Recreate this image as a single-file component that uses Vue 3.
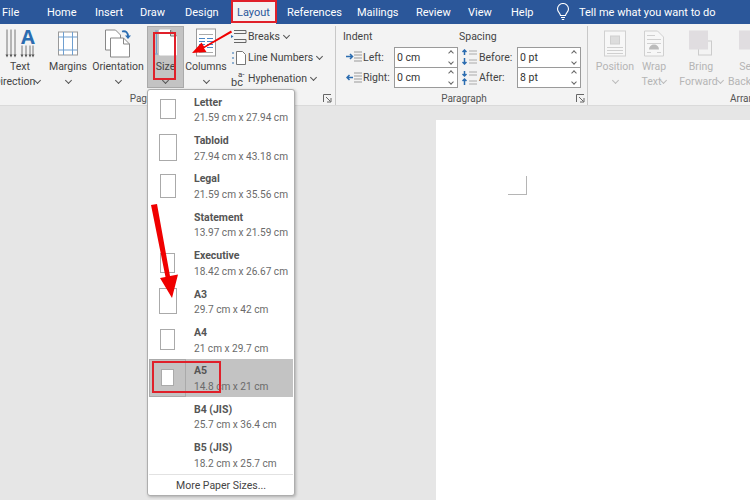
<template>
  <div class="word">
    <nav class="tabs">
      <span v-for="tab in tabs" :key="tab.name" class="tab" :class="{ active: tab.name === 'Layout' }" :style="{ width: tab.w + 'px' }">{{ tab.name }}</span>
      <svg class="bulb" width="14" height="18" viewBox="0 0 14 18" fill="none" stroke="#fff" stroke-width="1.1">
        <path d="M4.500 12.500C4.200 10 1.500 9 1.500 6a5.500 5.500 0 0 1 11 0c0 3-2.700 4-3 6.500z" />
        <path d="M5 14.500h4M5.800 16.500h2.400" />
      </svg>
      <span class="tell">Tell me what you want to do</span>
    </nav>

    <section class="ribbon">
      <div class="group page-group">
        <div class="group-body">
          <div class="tool t-text">
            <svg width="36" height="30" viewBox="0 0 36 30" fill="none">
              <g stroke="#777" stroke-width="1">
                <path d="M5 1v26M9 1v26M13 1v26M20 17v10M24 17v10M28 17v10M31 17v10" />
              </g>
              <g fill="#555">
                <path d="M3.500 26h3L5 29zM7.500 26h3L9 29zM11.500 26h3L13 29zM18.500 26h3L20 29zM22.500 26h3L24 29zM26.500 26h3L28 29zM29.500 26h3L31 29z" />
              </g>
              <text x="19" y="15" class="big-a">A</text>
            </svg>
            <span class="lbl">Text</span>
            <span class="lbl">Direction<i class="chev"></i></span>
          </div>
          <div class="tool t-margins">
            <svg width="22" height="26" viewBox="0 0 22 26" fill="#fff" stroke="#999">
              <rect x="1.500" y="1.500" width="19" height="23" />
              <path d="M6.500 1.500v23M15.500 1.500v23M1.500 6.500h19M1.500 19.500h19" stroke="#6f9fd0" />
            </svg>
            <span class="lbl">Margins</span>
            <span class="lbl"><i class="chev"></i></span>
          </div>
          <div class="tool t-orient">
            <svg width="28" height="30" viewBox="0 0 28 30" fill="#fff" stroke="#888">
              <path d="M1.500 1.500h10l5 5v15h-15z" />
              <path d="M6.500 9.500h13l6 6v13h-19z" />
              <path d="M19.500 9.500v6h6" fill="none" />
              <path d="M18 3c4-1 6 1 6 5" fill="none" stroke="#2b6cb0" stroke-width="1.800" />
              <path d="M21 7h6l-3 3.500z" fill="#2b6cb0" stroke="none" />
            </svg>
            <span class="lbl">Orientation</span>
            <span class="lbl"><i class="chev"></i></span>
          </div>
          <div class="tool t-size">
            <svg width="26" height="30" viewBox="0 0 26 30" fill="#fff" stroke="#777">
              <path d="M3.500 3v22M2 2.500h3M2 25.500h3" stroke="#6f9fd0" fill="none" />
              <path d="M6.500 1.500h11l6 6v19h-17z" stroke="#fff" />
              <path d="M17.500 1.500v6h6z" fill="#ddd" />
            </svg>
            <span class="lbl">Size</span>
            <span class="lbl"><i class="chev"></i></span>
          </div>
          <div class="tool t-columns">
            <svg width="20" height="30" viewBox="0 0 20 30" fill="#fff" stroke="#999">
              <rect x="0.500" y="0.500" width="19" height="27" />
              <path d="M3 6h14M3 24h14" stroke="#aaa" fill="none" />
              <path d="M3 10h6M11 10h6M3 13h6M11 13h6M3 16h6M11 16h6M3 19h6M11 19h6" stroke="#4a86c5" fill="none" />
            </svg>
            <span class="lbl">Columns</span>
            <span class="lbl"><i class="chev"></i></span>
          </div>
          <div class="stack">
            <div class="stack-row">
              <svg width="16" height="15" viewBox="0 0 16 15" fill="none" stroke="#666">
                <path d="M3 1.500h12v3H3M3 13.500h12v-3H3" />
                <path d="M0 6l2.500 1.500L0 9z" fill="#2b6cb0" stroke="none" />
              </svg>
              <span>Breaks<i class="chev"></i></span>
            </div>
            <div class="stack-row">
              <svg width="16" height="16" viewBox="0 0 16 16" fill="#fff" stroke="#777">
                <path d="M5.500 1.500h6l3 3v10h-9z" />
                <path d="M2 2v2M2 7v2M2 12v2" stroke="#2b6cb0" />
              </svg>
              <span>Line Numbers<i class="chev"></i></span>
            </div>
            <div class="stack-row">
              <span class="hyph"><em>a-</em>bc</span>
              <span>Hyphenation<i class="chev"></i></span>
            </div>
          </div>
        </div>
        <div class="group-label">
          <span></span><span class="page-lbl">Page Setup</span>
          <svg class="launcher" width="9" height="9" viewBox="0 0 9 9" fill="none" stroke="#666"><path d="M.5 8V.5H8M3 3l4.500 4.500M4 8h4V4" /></svg>
        </div>
      </div>

      <div class="group para-group">
        <div class="para-grid">
          <div class="para-col">
            <span class="para-head">Indent</span>
            <div v-for="row in indent" :key="row.label" class="para-row">
              <svg width="16" height="12" viewBox="0 0 16 12" fill="none" stroke="#999">
                <path d="M8 1h8M8 4h8M8 7h8M8 10h8" />
                <path :d="row.arrow" stroke="#2b6cb0" stroke-width="1.500" />
              </svg>
              <span class="para-label indent-label">{{ row.label }}</span>
              <div class="spin">
                <span>{{ row.value }}</span>
                <span class="spin-btns"><i class="up"></i><i class="down"></i></span>
              </div>
            </div>
          </div>
          <div class="para-col">
            <span class="para-head">Spacing</span>
            <div v-for="row in spacing" :key="row.label" class="para-row">
              <svg width="16" height="16" viewBox="0 0 16 16" fill="none" stroke="#aaa">
                <path d="M8 2h8M8 5h8M8 11h8M8 14h8" />
                <path :d="row.arrow" stroke="#2b6cb0" stroke-width="1.500" />
              </svg>
              <span class="para-label spacing-label">{{ row.label }}</span>
              <div class="spin">
                <span>{{ row.value }}</span>
                <span class="spin-btns"><i class="up"></i><i class="down"></i></span>
              </div>
            </div>
          </div>
        </div>
        <div class="group-label">
          <span></span><span>Paragraph</span>
          <svg class="launcher" width="9" height="9" viewBox="0 0 9 9" fill="none" stroke="#666"><path d="M.5 8V.5H8M3 3l4.500 4.500M4 8h4V4" /></svg>
        </div>
      </div>

      <div class="group arrange-group">
        <div class="group-body">
          <div class="tool off t-pos">
            <svg width="22" height="26" viewBox="0 0 22 26" fill="#f7f7f7" stroke="#d0d0d0">
              <rect x="0.500" y="0.500" width="21" height="25" />
              <rect x="6.500" y="5.500" width="9" height="8" fill="#ddd" />
              <path d="M3 17h16M3 20h16M3 23h16" />
            </svg>
            <span class="lbl">Position</span>
            <span class="lbl"><i class="chev"></i></span>
          </div>
          <div class="tool off t-wrap">
            <svg width="20" height="26" viewBox="0 0 20 26" fill="#f7f7f7" stroke="#d0d0d0">
              <path d="M.5.500h13l6 6v19H.5z" />
              <path d="M3 5h8M3 9h14M3 13h14M3 22h4M13 22h4" />
              <path d="M5 19a5 5 0 0 1 10 0z" fill="#bbb" stroke="none" />
            </svg>
            <span class="lbl">Wrap</span>
            <span class="lbl">Text<i class="chev"></i></span>
          </div>
          <div class="tool off t-bring">
            <svg width="24" height="26" viewBox="0 0 24 26" fill="none">
              <rect x="9.500" y="10.500" width="13" height="14" stroke="#ccc" />
              <rect x="0" y="0" width="19" height="19" fill="#e0dde0" />
            </svg>
            <span class="lbl">Bring</span>
            <span class="lbl">Forward<i class="chev"></i></span>
          </div>
          <div class="tool off t-send">
            <svg width="24" height="26" viewBox="0 0 24 26" fill="none">
              <rect x="0" y="0" width="19" height="19" fill="#e0dde0" />
            </svg>
            <span class="lbl">Send</span>
            <span class="lbl">Backward</span>
          </div>
        </div>
        <div class="group-label arrange-label"><span>Arrange</span></div>
      </div>
    </section>

    <main class="canvas">
      <div class="paper">
        <div class="crop"></div>
      </div>
    </main>

    <div class="menu">
      <div v-for="size in sizes" :key="size.name" class="item" :class="{ selected: size.name === 'A5' }">
        <div class="thumb-col">
          <div v-if="size.w" class="thumb" :style="{ width: size.w + 'px', height: size.h + 'px' }"></div>
        </div>
        <div class="item-text">
          <strong>{{ size.name }}</strong>
          <span>{{ size.dim }}</span>
        </div>
      </div>
      <div class="more">More Paper Sizes...</div>
    </div>

    <!-- red markup drawn over the screenshot -->
    <div class="mark mark-layout"></div>
    <div class="mark mark-size"></div>
    <div class="mark mark-a5"></div>
    <svg class="arrows" width="750" height="500" viewBox="0 0 750 500" fill="#f00000">
      <path d="M231 30.500L204 46.500l-2.500-4L192 53l14.500-1-2.500-3.800L232 32.500z" />
      <path d="M151 205l6-1 13 72 8-1.500L172 298l-12-20 5.500-1z" />
    </svg>
  </div>
</template>

<script setup>
// width = distance to the next tab's left edge
const tabs = [
  { name: 'File', w: 45 },
  { name: 'Home', w: 48 },
  { name: 'Insert', w: 45 },
  { name: 'Draw', w: 45 },
  { name: 'Design', w: 46 },
  { name: 'Layout', w: 45 },
  { name: 'References', w: 70 },
  { name: 'Mailings', w: 59 },
  { name: 'Review', w: 52 },
  { name: 'View', w: 43 },
  { name: 'Help', w: 45 }
]

const indent = [
  { label: 'Left:', value: '0 cm', arrow: 'M0 5.500h6M4 3l2.500 2.500L4 8' },
  { label: 'Right:', value: '0 cm', arrow: 'M7 5.500H1M3.500 3L1 5.500 3.500 8' }
]

const spacing = [
  { label: 'Before:', value: '0 pt', arrow: 'M3.500 1v5M1.500 3l2-2 2 2M3.500 9v6M1.500 13l2 2 2-2' },
  { label: 'After:', value: '8 pt', arrow: 'M3.500 1v5M1.500 4l2 2 2-2M3.500 9v6M1.500 11l2-2 2 2' }
]

const sizes = [
  { name: 'Letter', dim: '21.59 cm x 27.94 cm', w: 16, h: 20 },
  { name: 'Tabloid', dim: '27.94 cm x 43.18 cm', w: 18, h: 27 },
  { name: 'Legal', dim: '21.59 cm x 35.56 cm', w: 16, h: 24 },
  { name: 'Statement', dim: '13.97 cm x 21.59 cm' },
  { name: 'Executive', dim: '18.42 cm x 26.67 cm', w: 15, h: 20 },
  { name: 'A3', dim: '29.7 cm x 42 cm', w: 18, h: 26 },
  { name: 'A4', dim: '21 cm x 29.7 cm', w: 15, h: 21 },
  { name: 'A5', dim: '14.8 cm x 21 cm', w: 13, h: 17 },
  { name: 'B4 (JIS)', dim: '25.7 cm x 36.4 cm' },
  { name: 'B5 (JIS)', dim: '18.2 cm x 25.7 cm' }
]
</script>

<style>
html, body {
  margin: 0;
  overflow: hidden;
}
</style>

<style scoped>
.word {
  position: relative;
  width: 750px;
  height: 500px;
  display: flex;
  flex-direction: column;
  overflow: hidden;
  background: #e6e6e6;
  font-family: Roboto, "Open Sans", Arial, sans-serif;
  font-size: 10.5px;
  color: #444;
}

.tabs {
  height: 24px;
  flex: none;
  display: flex;
  align-items: center;
  background: #2b579a;
  color: #fff;
  font-size: 11px;
  padding-left: 2px;
}
.tab {
  flex: none;
  white-space: nowrap;
}
.tab.active {
  align-self: stretch;
  display: flex;
  align-items: center;
  justify-content: center;
  margin-right: 11px;
  background: #f3f3f3;
  color: #2b579a;
}
.bulb {
  flex: none;
}
.tell {
  margin-left: 9px;
  white-space: nowrap;
}

.ribbon {
  height: 82px;
  flex: none;
  display: flex;
  background: #f3f3f3;
  border-bottom: 1px solid #dadada;
  box-sizing: border-box;
  overflow: hidden;
}
.group {
  flex: none;
  display: flex;
  flex-direction: column;
  box-sizing: border-box;
  margin-top: 2px;
}
.page-group {
  width: 336px;
  border-right: 1px solid #c8c8c8;
  padding-right: 3px;
}
.para-group {
  width: 252px;
  border-right: 1px solid #c8c8c8;
  padding: 0 2px 0 7px;
}
.arrange-group {
  flex: 1;
  min-width: 0;
  overflow: hidden;
}
.group-body {
  flex: 1;
  display: flex;
}
.group-label {
  height: 13px;
  flex: none;
  display: grid;
  grid-template-columns: 1fr auto 1fr;
  align-items: center;
  font-size: 10px;
  color: #555;
  line-height: 13px;
}
.launcher {
  justify-self: end;
}
.page-lbl {
  transform: translateX(-11px);
}

.tool {
  flex: none;
  display: flex;
  flex-direction: column;
  align-items: center;
  box-sizing: border-box;
  padding-top: 2px;
  white-space: nowrap;
}
.tool svg {
  height: 31px;
  flex: none;
}
.lbl {
  height: 15px;
  line-height: 15px;
}
.t-text {
  width: 40px;
  margin-right: 4px;
}
.t-text .lbl + .lbl {
  margin-left: -6px;
}
.t-margins {
  width: 48px;
}
.t-orient {
  width: 52px;
}
.t-size {
  width: 37px;
  height: 62px;
  margin-left: 3px;
  background: #c3c3c3;
  box-shadow: inset 0 0 0 1px #aaa;
}
.t-columns {
  width: 44px;
}
.chev {
  display: inline-block;
  width: 4px;
  height: 4px;
  margin: 0 0 2px 4px;
  border-right: 1px solid #555;
  border-bottom: 1px solid #555;
  transform: rotate(45deg);
}
.lbl .chev:only-child {
  margin-left: 0;
}
.big-a {
  font-size: 20px;
  font-weight: 700;
  fill: #2b6cb0;
  font-family: "Open Sans", sans-serif;
}

.stack {
  display: flex;
  flex-direction: column;
  margin-left: 3px;
}
.stack-row {
  height: 21px;
  display: flex;
  align-items: center;
  gap: 1px;
  white-space: nowrap;
}
.stack-row svg {
  flex: none;
}
.hyph {
  width: 16px;
  font-size: 11px;
  line-height: 9px;
  white-space: nowrap;
}
.hyph em {
  display: block;
  font-style: normal;
  font-size: 8px;
  line-height: 7px;
  margin-left: 7px;
}

.para-grid {
  flex: 1;
  display: flex;
}
.para-col {
  width: 116px;
  flex: none;
  display: flex;
  flex-direction: column;
}
.para-head {
  height: 21px;
  line-height: 21px;
}
.para-row {
  height: 20.5px;
  display: flex;
  align-items: center;
}
.para-row svg {
  flex: none;
  margin-left: 3px;
}
.para-col:last-child .para-row svg {
  margin-left: 2px;
}
.para-label {
  flex: none;
  white-space: nowrap;
}
.indent-label {
  width: 31px;
  margin-left: 1px;
}
.spacing-label {
  width: 38px;
  margin-left: 2px;
}
.spin {
  width: 64px;
  height: 21px;
  flex: none;
  box-sizing: border-box;
  display: flex;
  align-items: center;
  justify-content: space-between;
  padding: 0 4px 0 2px;
  background: #fff;
  border: 1px solid #9a9a9a;
  color: #333;
}
.spin-btns {
  display: flex;
  flex-direction: column;
  gap: 5px;
}
.spin-btns i {
  display: block;
  width: 3px;
  height: 3px;
  border-left: 1px solid #666;
  border-top: 1px solid #666;
  transform: rotate(45deg);
}
.spin-btns i.down {
  transform: rotate(225deg);
}

.off {
  color: #b5b5b5;
}
.off .chev {
  border-color: #bbb;
}
.t-pos {
  width: 40px;
  margin-left: 7px;
}
.t-wrap {
  width: 38px;
}
.t-bring {
  width: 56px;
}
.t-send {
  width: 44px;
}
.arrange-label {
  display: block;
  padding-left: 142px;
  white-space: nowrap;
}

.canvas {
  flex: 1;
  min-height: 0;
  padding: 14px 0 0 436px;
  box-sizing: border-box;
  overflow: hidden;
}
.paper {
  height: 100%;
  background: #fff;
  padding: 56px 0 0 72px;
  box-sizing: border-box;
}
.crop {
  width: 19px;
  height: 19px;
  box-sizing: border-box;
  border-right: 1px solid #b5b5b5;
  border-bottom: 1px solid #b5b5b5;
}

.menu {
  position: absolute;
  left: 147px;
  top: 89px;
  width: 148px;
  height: 407px;
  box-sizing: border-box;
  padding: 0 1px 1px;
  background: #fff;
  border: 1px solid #aeaeae;
  border-radius: 3px;
  box-shadow: 1px 1px 3px rgba(0, 0, 0, 0.25);
  display: flex;
  flex-direction: column;
}
.item {
  height: 38.4px;
  flex: none;
  display: flex;
  align-items: center;
}
.item.selected {
  background: #c3c3c3;
}
.thumb-col {
  width: 37px;
  height: 100%;
  flex: none;
  box-sizing: border-box;
  display: flex;
  align-items: center;
  justify-content: center;
}
.selected .thumb-col {
  border: 1px solid #aaa;
}
.thumb {
  background: #fff;
  border: 1px solid #aaa;
  box-sizing: border-box;
}
.item-text {
  margin-left: 8px;
  padding-top: 2px;
  display: flex;
  flex-direction: column;
  line-height: 15.500px;
  white-space: nowrap;
}
.item-text strong {
  font-weight: 700;
  color: #555;
}
.item-text span {
  font-size: 10.1px;
  color: #6a6a6a;
}
.more {
  margin-top: auto;
  height: 21px;
  line-height: 21px;
  border-top: 1px solid #e2e2e2;
  text-align: center;
  color: #444;
}

.mark {
  position: absolute;
  box-sizing: border-box;
  border: 2px solid #e0202a;
}
.mark-layout {
  left: 231px;
  top: 0;
  width: 46px;
  height: 23px;
}
.mark-size {
  left: 153px;
  top: 32px;
  width: 23px;
  height: 48px;
}
.mark-a5 {
  left: 152px;
  top: 361px;
  width: 69px;
  height: 32px;
}
.arrows {
  position: absolute;
  left: 0;
  top: 0;
  pointer-events: none;
}
</style>
